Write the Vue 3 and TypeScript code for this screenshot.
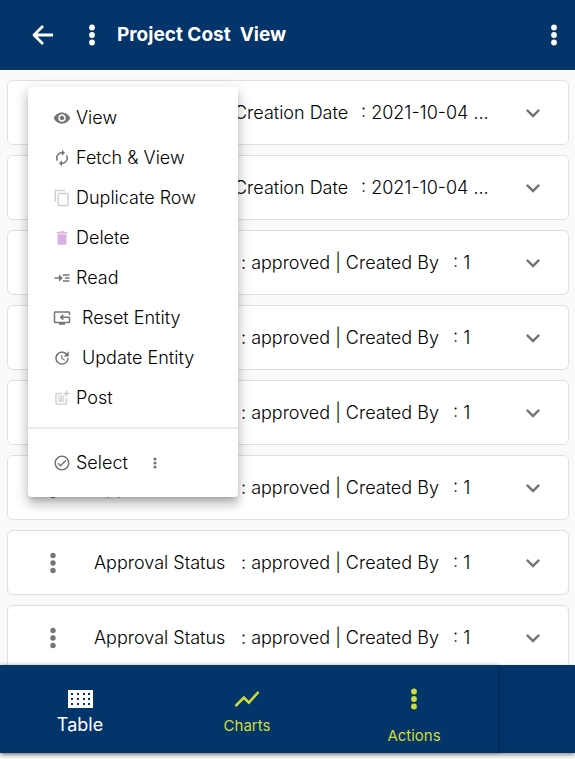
<script setup lang="ts">
import { ref } from 'vue'

interface MenuEntry {
  label: string
  path: string
  tone: 'normal' | 'muted' | 'accent'
  spaced?: boolean
}

interface Row {
  id: number
  kind: 'date' | 'status'
  parts: string[]
}

const menuEntries: MenuEntry[] = [
  {
    label: 'View',
    tone: 'normal',
    path: 'M12 4.5C7 4.5 2.73 7.61 1 12c1.73 4.39 6 7.5 11 7.5s9.27-3.11 11-7.5c-1.73-4.39-6-7.5-11-7.5zM12 17c-2.76 0-5-2.24-5-5s2.24-5 5-5 5 2.24 5 5-2.24 5-5 5zm0-8c-1.66 0-3 1.34-3 3s1.34 3 3 3 3-1.34 3-3-1.34-3-3-3z',
  },
  {
    label: 'Fetch & View',
    tone: 'normal',
    path: 'M12 6v3l4-4-4-4v3c-4.42 0-8 3.58-8 8 0 1.57.46 3.03 1.24 4.26L6.7 14.8c-.45-.83-.7-1.79-.7-2.8 0-3.31 2.69-6 6-6zm6.76 1.74L17.3 9.2c.44.84.7 1.79.7 2.8 0 3.31-2.69 6-6 6v-3l-4 4 4 4v-3c4.42 0 8-3.58 8-8 0-1.57-.46-3.03-1.24-4.26z',
  },
  {
    label: 'Duplicate Row',
    tone: 'muted',
    path: 'M16 1H4c-1.1 0-2 .9-2 2v14h2V3h12V1zm3 4H8c-1.1 0-2 .9-2 2v14c0 1.1.9 2 2 2h11c1.1 0 2-.9 2-2V7c0-1.1-.9-2-2-2zm0 16H8V7h11v14z',
  },
  {
    label: 'Delete',
    tone: 'accent',
    path: 'M6 19c0 1.1.9 2 2 2h8c1.1 0 2-.9 2-2V7H6v12zM19 4h-3.5l-1-1h-5l-1 1H5v2h14V4z',
  },
  {
    label: 'Read',
    tone: 'normal',
    path: 'M22 7h-9v2h9V7zM22 15h-9v2h9v-2zM22 11h-6v2h6v-2zM13 12L8 7v4H2v2h6v4z',
  },
  {
    label: 'Reset Entity',
    tone: 'normal',
    spaced: true,
    path: 'M21 10H12.83l1.59-1.59L13 7l-4 4 4 4 1.41-1.41L12.83 12H21v5H3V5h18v3h2V5c0-1.1-.9-2-2-2H3c-1.1 0-2 .9-2 2v12c0 1.1.9 2 2 2h5v2h8v-2h5c1.1 0 2-.9 2-2v-5c0-1.1-.9-2-2-2z',
  },
  {
    label: 'Update Entity',
    tone: 'normal',
    spaced: true,
    path: 'M21 10.12h-6.78l2.74-2.82c-2.73-2.7-7.15-2.8-9.88-.1-2.73 2.71-2.73 7.08 0 9.79s7.15 2.71 9.88 0C18.32 15.65 19 14.08 19 12.1h2c0 1.98-.88 4.55-2.64 6.29-3.51 3.48-9.21 3.48-12.72 0-3.5-3.47-3.53-9.11-.02-12.58s9.14-3.47 12.65 0L21 3v7.12zM12.5 8v4.25l3.5 2.08-.72 1.21L11 13V8h1.5z',
  },
  {
    label: 'Post',
    tone: 'muted',
    path: 'M17 19.22H5V7h7V5H5c-1.1 0-2 .9-2 2v12c0 1.1.9 2 2 2h12c1.1 0 2-.9 2-2v-7h-2v7.22zM19 2h-2v3h-3v2h3v3h2V7h3V5h-3V2zM7 9h8v2H7zM7 12h8v2H7zM7 15h8v2H7z',
  },
]

const rows: Row[] = Array.from({ length: 8 }, (_, i): Row =>
  i < 2
    ? { id: i, kind: 'date', parts: ['Created By : 1 |', 'Creation Date', ': 2021-10-04 ...'] }
    : { id: i, kind: 'status', parts: ['Approval Status', ': approved | Created By', ': 1'] },
)

const menuOpen = ref(true)
const openRow = ref(-1)

function toggleRow(id: number): void {
  openRow.value = openRow.value === id ? -1 : id
}
</script>

<template>
  <div class="screen">
    <header class="topbar">
      <button class="plain back" type="button" aria-label="Back">
        <svg width="22" height="22" viewBox="0 0 22 22">
          <path d="M11 2L2 11l9 9M2 11h19" fill="none" stroke="currentColor" stroke-width="2.8" stroke-linejoin="round" />
        </svg>
      </button>
      <button class="plain dots" type="button" aria-label="Row actions" @click="menuOpen = !menuOpen">
        <svg width="6" height="22" viewBox="0 0 6 22">
          <circle cx="3" cy="3.5" r="2.9" /><circle cx="3" cy="11" r="2.9" /><circle cx="3" cy="18.5" r="2.9" />
        </svg>
      </button>
      <h1 class="title">Project Cost&nbsp; View</h1>
      <button class="plain dots more" type="button" aria-label="More options">
        <svg width="6" height="22" viewBox="0 0 6 22">
          <circle cx="3" cy="3.5" r="2.9" /><circle cx="3" cy="11" r="2.9" /><circle cx="3" cy="18.5" r="2.9" />
        </svg>
      </button>
    </header>

    <main class="list">
      <article v-for="row in rows" :key="row.id" class="card">
        <button class="plain dots card-dots" type="button" aria-label="Row menu">
          <svg width="6" height="22" viewBox="0 0 6 22">
            <circle cx="3" cy="3.5" r="2.7" /><circle cx="3" cy="11" r="2.7" /><circle cx="3" cy="18.5" r="2.7" />
          </svg>
        </button>
        <p class="summary" :class="row.kind">
          <span v-for="part in row.parts" :key="part">{{ part }}</span>
        </p>
        <button
          class="plain chevron"
          type="button"
          aria-label="Expand row"
          :aria-expanded="openRow === row.id"
          @click="toggleRow(row.id)"
        >
          <svg width="28" height="28" viewBox="0 0 24 24">
            <path d="M16.59 8.59L12 13.17 7.41 8.59 6 10l6 6 6-6z" />
          </svg>
        </button>
      </article>
    </main>

    <nav class="bottombar">
      <div class="tabs">
        <button class="plain tab active" type="button">
          <svg width="25" height="18" viewBox="0 0 25 18">
            <path
              fill-rule="evenodd"
              d="M0 0h25v18H0zM3 3v2h2V3zM9 3v2h2V3zM15 3v2h2V3zM20 3v2h2V3zM3 8v2h2V8zM9 8v2h2V8zM15 8v2h2V8zM20 8v2h2V8zM3 13v2h2v-2zM9 13v2h2v-2zM15 13v2h2v-2zM20 13v2h2v-2z"
            />
          </svg>
          <span>Table</span>
        </button>
        <button class="plain tab" type="button">
          <svg width="30" height="30" viewBox="0 0 24 24">
            <path d="M3.5 18.49l6-6.01 4 4L22 6.92l-1.41-1.41-7.09 7.97-4-4L2 16.99z" />
          </svg>
          <span>Charts</span>
        </button>
        <button class="plain tab actions" type="button">
          <svg width="6" height="22" viewBox="0 0 6 22">
            <circle cx="3" cy="3.5" r="2.9" /><circle cx="3" cy="11" r="2.9" /><circle cx="3" cy="18.5" r="2.9" />
          </svg>
          <span>Actions</span>
        </button>
      </div>
    </nav>

    <div v-if="menuOpen" class="menu" role="menu">
      <button
        v-for="entry in menuEntries"
        :key="entry.label"
        class="plain entry"
        :class="[entry.tone, { spaced: entry.spaced }]"
        type="button"
        role="menuitem"
      >
        <svg width="18" height="18" viewBox="0 0 24 24"><path :d="entry.path" /></svg>
        <span>{{ entry.label }}</span>
      </button>
      <hr class="divider" />
      <div class="select-row">
        <button class="plain entry normal" type="button" role="menuitem">
          <svg width="18" height="18" viewBox="0 0 24 24">
            <path d="M16.59 7.58L10 14.17l-2.59-2.58L6 13l4 4 8-8zM12 2C6.48 2 2 6.48 2 12s4.48 10 10 10 10-4.48 10-10S17.52 2 12 2zm0 18c-4.42 0-8-3.58-8-8s3.58-8 8-8 8 3.58 8 8-3.58 8-8 8z" />
          </svg>
          <span>Select</span>
        </button>
        <button class="plain dots select-dots" type="button" aria-label="Select options">
          <svg width="4" height="12" viewBox="0 0 4 12">
            <circle cx="2" cy="2" r="1.6" /><circle cx="2" cy="6" r="1.6" /><circle cx="2" cy="10" r="1.6" />
          </svg>
        </button>
      </div>
    </div>
  </div>
</template>

<style>
body {
  margin: 0;
  background: #fafafa;
}
</style>

<style scoped>
.screen {
  position: relative;
  display: flex;
  flex-direction: column;
  height: 100vh;
  padding-bottom: 6px;
  box-sizing: border-box;
  overflow: hidden;
  background: #fafafa;
  color: #000;
  font-family: Inter, 'Liberation Sans', sans-serif;
  font-size: 18px;
  font-weight: 300;
  line-height: 24px;
}

svg {
  display: block;
  flex: none;
  fill: currentColor;
}

.plain {
  display: flex;
  align-items: center;
  margin: 0;
  padding: 0;
  border: 0;
  background: none;
  color: inherit;
  font: inherit;
  cursor: pointer;
}

.topbar {
  display: flex;
  flex: none;
  align-items: center;
  height: 70px;
  padding: 0 18px 0 32px;
  background: #03346a;
  color: #fff;
}

.back {
  margin-right: 35px;
}

.title {
  margin: 0 0 0 22px;
  font-size: 19px;
  font-weight: 700;
  white-space: nowrap;
}

.more {
  margin-left: auto;
}

.list {
  display: flex;
  flex: 1;
  flex-direction: column;
  gap: 10px;
  min-height: 0;
  padding: 10px 6px 0 7px;
  overflow: auto;
  scrollbar-width: none;
}

.card {
  display: flex;
  flex: none;
  align-items: center;
  height: 65px;
  padding: 0 21px 0 42px;
  box-sizing: border-box;
  border: 1px solid #e0e0e0;
  border-radius: 6px;
  background: #fff;
}

.card-dots,
.chevron {
  color: #757575;
}

.summary {
  display: grid;
  flex: 1;
  min-width: 0;
  margin: 0 0 0 38px;
  overflow: hidden;
  white-space: nowrap;
}

.summary.status {
  grid-template-columns: 147px 212px 1fr;
}

.summary.date {
  grid-template-columns: 140px 127px 1fr;
}

.bottombar {
  z-index: 1;
  flex: none;
  background: #03346a;
  box-shadow: 0 2px 4px rgba(0, 0, 0, 0.4);
}

.tabs {
  display: grid;
  grid-template-columns: repeat(3, 1fr);
  width: 87%;
  max-width: 498px;
  height: 88px;
  box-shadow: 1px 0 4px rgba(0, 0, 0, 0.25);
}

.tab {
  flex-direction: column;
  padding: 19px 4px 0 0;
  color: #cddc39;
  font-size: 15px;
  font-weight: 400;
}

.tab.active {
  gap: 5px;
  padding: 25px 6px 0 0;
  color: #fff;
  font-size: 18px;
}

.tab.actions {
  gap: 14px;
  padding: 23px 2px 0 0;
}

.menu {
  position: absolute;
  z-index: 2;
  top: 87px;
  left: 28px;
  width: 210px;
  padding: 11px 0 14px;
  box-sizing: border-box;
  border-radius: 4px;
  background: #fff;
  box-shadow:
    0 5px 5px -3px rgba(0, 0, 0, 0.2),
    0 8px 10px 1px rgba(0, 0, 0, 0.14),
    0 3px 14px 2px rgba(0, 0, 0, 0.12);
}

.entry {
  gap: 5px;
  height: 40px;
  padding-left: 25px;
  white-space: nowrap;
}

.entry.spaced {
  gap: 11px;
}

.entry svg {
  color: #757575;
}

.entry.muted svg {
  color: #d0d0d0;
}

.entry.accent svg {
  color: #d9aee0;
}

.divider {
  height: 2px;
  margin: 9px 0 14px;
  border: 0;
  background: #ebebeb;
}

.select-row {
  display: flex;
  align-items: center;
}

.select-dots {
  margin-left: 25px;
  color: #757575;
}
</style>
